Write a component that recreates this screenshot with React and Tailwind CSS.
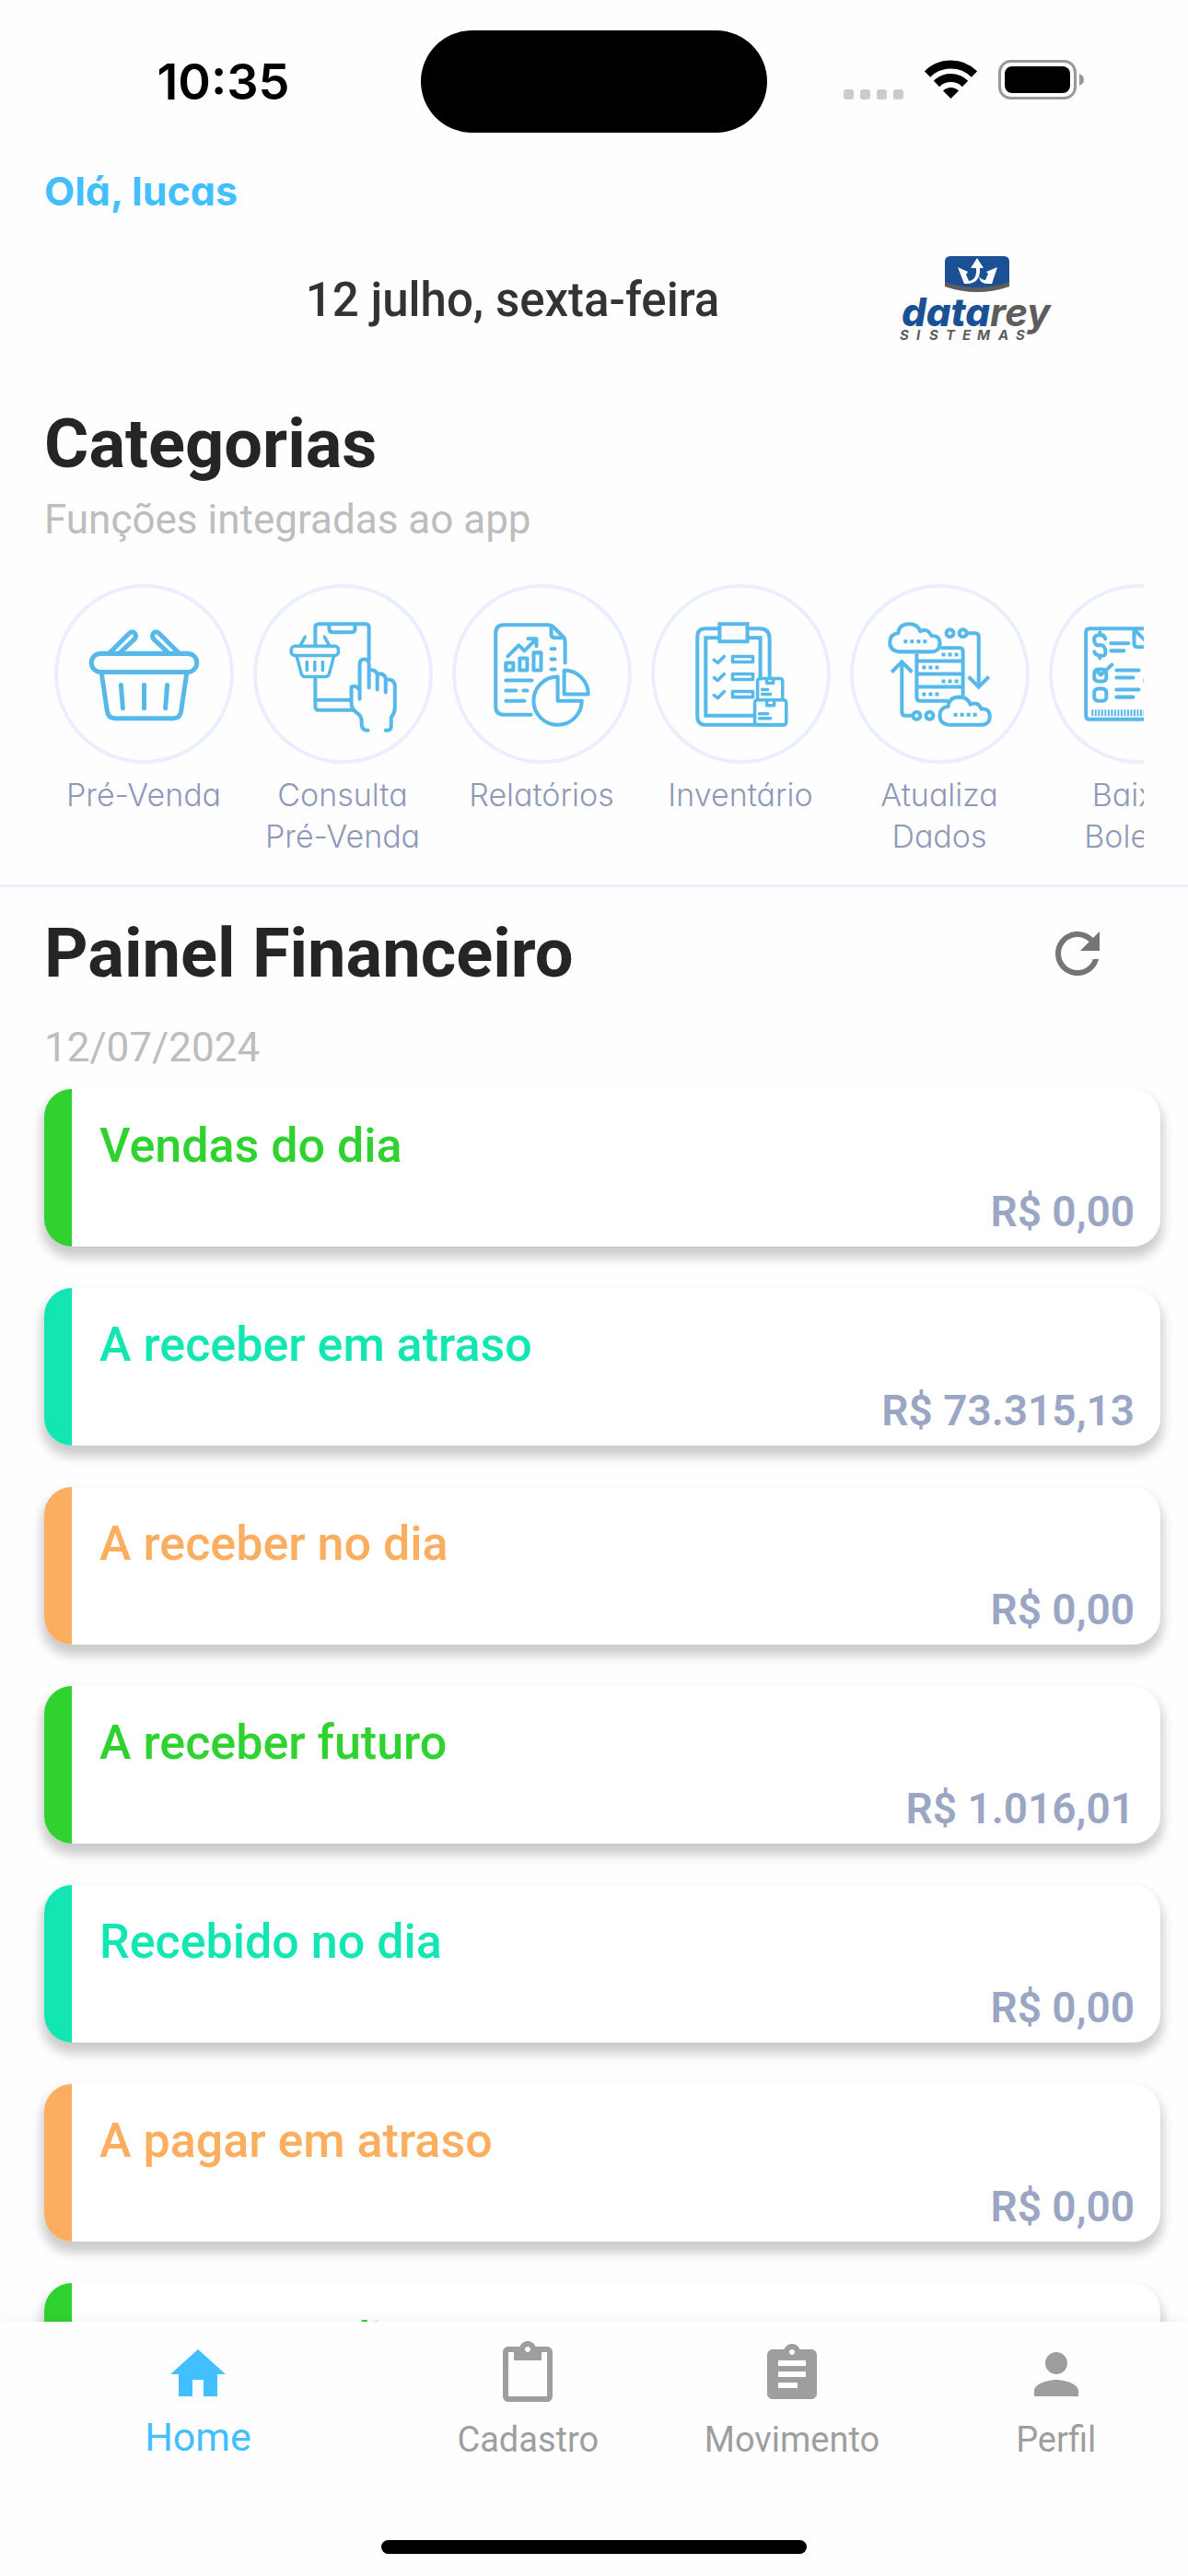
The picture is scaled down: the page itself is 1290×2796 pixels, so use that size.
import { MdHome, MdContentPaste, MdAssignment, MdPerson, MdRefresh } from "react-icons/md";

const stroke = {
  fill: "none",
  stroke: "currentColor",
  strokeWidth: 4,
  strokeLinecap: "round",
  strokeLinejoin: "round",
};

function Drawing({ children }) {
  return (
    <svg viewBox="0 0 194 194" className="h-full w-full text-[#57b8ea]" {...stroke} aria-hidden="true">
      {children}
    </svg>
  );
}

function BasketIcon() {
  return (
    <Drawing>
      <rect x="40" y="75" width="114" height="20" rx="10" strokeWidth="5" />
      <path d="M51 96l6 41q1 8 9 8h62q8 0 9-8l6-41" strokeWidth="5" />
      <path d="M60 74l21-21q4-3 6 0t0 6l-16 15M134 74l-21-21q-4-3-6 0t0 6l16 15" strokeWidth="5" />
      <path d="M72 109l2 25M97 109v25M122 109l-2 25" strokeWidth="5" />
    </Drawing>
  );
}

function PhoneIcon() {
  return (
    <Drawing>
      <path d="M67 67V47q0-4 4-4h50q4 0 4 4v35M67 102v30q0 4 4 4h38M68 125h36M82 44v4q0 4 4 4h20q4 0 4-4v-4" />
      <rect x="41" y="67" width="51" height="10" rx="4" strokeWidth="3.5" />
      <path d="M47 78l5 19q1 3 4 3h22q3 0 4-3l5-19M51 66l5-9M82 66l-5-9M58 84v9M66.500 84v9M75 84v9" strokeWidth="3.500" />
      <path d="M115 124V87q0-6 5-6t5 6v25M125 93q9-1 9 6v15M134 97q9-1 9 6v14M143 103q9-1 10 6v25q0 5-4 10v9q0 5-4 5h-2M115 115q-3-6-9-4v18q0 6 6 10t5 12q0 7 7 7" />
    </Drawing>
  );
}

function ReportIcon() {
  return (
    <Drawing>
      <path d="M85 141H56q-9 0-9-9V53q0-9 9-9h48q3 0 5 2l11 11q2 2 2 6v22M107 45v9q0 4 4 4h10" />
      <path d="M60 78l12-12 6 6 12-12M82 59h9v8" />
      <path d="M58 85h8v8h-8zM73 80h8v13h-8zM88 74h8v19h-8zM58 104h28M58 115h11M77 115h4M58 126h20M107 70h4M107 81h4M107 92h4" />
      <path d="M114 100v26h26a26 26 0 1 1-26-26zM121 93v26h26a26 26 0 0 0-26-26z" />
    </Drawing>
  );
}

function InventoryIcon() {
  return (
    <Drawing>
      <path d="M74 48H59q-9 0-9 9v86q0 9 9 9h84M104 48h13q11 0 11 11v42" />
      <path d="M74 58H59v84h52M104 58h14v44M74 43h30v19H74z" strokeLinejoin="miter" />
      <path d="M68 82l4 3 7-7M68 101l4 3 7-7M68 120l4 3 7-7M88 78h22v6H88zM88 97h22v6H88zM88 116h22v6H88z" strokeWidth="3.500" />
      <path d="M115 125v-20q0-3 3-3h21q3 0 3 3v20M125 103v4h7v-4M120 114h6M120 119h9M112 149v-21q0-3 3-3h28q3 0 3 3v21q0 3-3 3h-28q-3 0-3-3zM125 126v5h8v-5M117 140h9M117 145h12" strokeWidth="3.500" />
    </Drawing>
  );
}

function ServerIcon() {
  const dots = { strokeWidth: 4, strokeDasharray: "4 3", strokeLinecap: "butt" };
  return (
    <Drawing>
      <path d="M72 75v47q0 4 4 4h30M98 69h20q4 0 4 4v48M72 83h50M72 97h50M72 111h50" strokeLinecap="butt" />
      <path d="M53 73q-10-1-10-10t9-10q1-10 12-10 9 0 12 8 8-4 12 5 9-1 9 8 0 8-8 9z" />
      <path d="M107 152q-10-1-10-10t9-10q1-10 12-10 9 0 12 8 8-4 12 5 9-1 9 8 0 8-8 9z" />
      <path d="M58 62h26M112 141h26M99 76h20M78 90h19M99 105h20M78 119h19" {...dots} />
      <circle cx="108" cy="53" r="4" />
      <circle cx="122" cy="53" r="4" />
      <path d="M126 53h9q4 0 4 4v51M128 100l11 11 11-11" strokeLinecap="butt" strokeLinejoin="miter" />
      <circle cx="72" cy="142" r="4" />
      <circle cx="86" cy="142" r="4" />
      <path d="M68 142h-8q-4 0-4-4V86M45 95l11-11 11 11" strokeLinecap="butt" strokeLinejoin="miter" />
    </Drawing>
  );
}

function InvoiceIcon() {
  return (
    <Drawing>
      <path d="M150 48H44q-4 0-4 4v90q0 4 4 4h106M92 50v14q0 4 4 4h14M93 50l16 16" />
      <path d="M61 59q-2-5-6-4-7 0-6 6t6 5 6 6-6 5q-5 0-6-4M55 52v3M55 77v3M67 64h19M67 72h14" />
      <rect x="49" y="92" width="13" height="13" rx="4" />
      <path d="M52 94l4 4 12-11M73 93h24M73 101h18M73 114h24M73 122h18M108 96q-8 8 0 16" />
      <rect x="49" y="113" width="13" height="13" rx="4" />
      <path d="M46 139h80" strokeWidth="7" strokeDasharray="2 1.500" strokeLinecap="butt" />
    </Drawing>
  );
}

const categories = [
  { label: "Pré-Venda", Icon: BasketIcon },
  { label: "Consulta Pré-Venda", Icon: PhoneIcon },
  { label: "Relatórios", Icon: ReportIcon },
  { label: "Inventário", Icon: InventoryIcon },
  { label: "Atualiza Dados", Icon: ServerIcon },
  { label: "Baixar Boletos", Icon: InvoiceIcon },
];

const green = { bar: "bg-[#2fd22f]", text: "text-[#2fd22f]" };
const teal = { bar: "bg-[#12e6b2]", text: "text-[#12e6b2]" };
const orange = { bar: "bg-[#fbae5f]", text: "text-[#fbae5f]" };

const cards = [
  { title: "Vendas do dia", value: "R$ 0,00", tone: green },
  { title: "A receber em atraso", value: "R$ 73.315,13", tone: teal },
  { title: "A receber no dia", value: "R$ 0,00", tone: orange },
  { title: "A receber futuro", value: "R$ 1.016,01", tone: green },
  { title: "Recebido no dia", value: "R$ 0,00", tone: teal },
  { title: "A pagar em atraso", value: "R$ 0,00", tone: orange },
  { title: "A pagar no dia", value: "R$ 0,00", tone: green },
];

const tabs = [
  { label: "Home", Icon: MdHome, active: true },
  { label: "Cadastro", Icon: MdContentPaste },
  { label: "Movimento", Icon: MdAssignment },
  { label: "Perfil", Icon: MdPerson },
];

function StatusBar() {
  return (
    <header className="grid h-[177px] shrink-0 grid-cols-[1fr_376px_1fr] items-start">
      <div className="flex h-[177px] items-center justify-center pl-7 font-[Inter,sans-serif] text-[54px] font-semibold text-black">
        10:35
      </div>
      <div className="mt-[33px] h-[111px] rounded-full bg-black" />
      <div className="mt-[65px] flex h-[43px] items-end justify-end gap-[23px] pr-[113px]">
        <div className="flex gap-[7px]">
          {[0, 1, 2, 3].map((i) => (
            <span key={i} className="h-[11px] w-[11px] rounded-[3px] bg-[#cbcbcb]" />
          ))}
        </div>
        <svg width="57" height="43" viewBox="0 0 57 43" aria-hidden="true">
          <g fill="none" stroke="#000" strokeWidth="9">
            <path d="M3 15.500a36 36 0 0 1 51 0" />
            <path d="M13 26a22 22 0 0 1 31 0" />
          </g>
          <path d="M20 33.500a12 12 0 0 1 17 0L28.500 42z" />
        </svg>
        <svg width="93" height="43" viewBox="0 0 93 43" aria-hidden="true">
          <rect x="1.500" y="1.500" width="82" height="40" rx="12" fill="none" stroke="#999" strokeWidth="3" />
          <rect x="7" y="7" width="71" height="29" rx="8" />
          <path d="M88 15q5 2 5 6.500T88 28z" fill="#999" />
        </svg>
      </div>
    </header>
  );
}

function Logo() {
  return (
    <svg width="168" height="94" viewBox="974 276 168 94" className="overflow-visible" role="img" aria-label="datarey sistemas">
      <path d="M1026 300v11q35 12 70 0v-11z" fill="#5d5d5d" />
      <path d="M1026 284q0-6 6-6h58q6 0 6 6v22q-35 12-70 0z" fill="#1a5195" />
      <g fill="#fff">
        <path d="M1040 290l11 5-2 3 3 7q9-1 8-14h-6l7-11 7 11h-4q1 18-17 17z" />
        <path d="M1083 290l-6 18h-5q-8 0-9-8 3 4 7 4l3-7-2-2z" />
      </g>
      <text x="979" y="354" fontFamily="Inter, sans-serif" fontSize="42" fontStyle="italic" fontWeight="800" fill="#1a5195">
        data<tspan fontWeight="700" fill="#5d5d5d">rey</tspan>
      </text>
      <text y="369" x="977 995 1009 1027 1045 1061 1084 1103" fontFamily="Inter, sans-serif" fontSize="15" fontStyle="italic" fontWeight="700" fill="#5d5d5d">
        SISTEMAS
      </text>
    </svg>
  );
}

function FinanceCard({ title, value, tone }) {
  return (
    <li className="flex h-[171px] shrink-0 overflow-hidden rounded-[30px] bg-white shadow-[0_9px_12px_3px_#00000033]">
      <div className={`w-[30px] shrink-0 ${tone.bar}`} />
      <div className="flex flex-1 flex-col pt-[30px] pr-[28px] pl-[30px]">
        <h3 className={`text-[52px] leading-[64px] font-medium ${tone.text}`}>{title}</h3>
        <p className="mt-[12px] text-right text-[46px] leading-[54px] font-semibold text-[#9ba6c5]">{value}</p>
      </div>
    </li>
  );
}

export default function App() {
  return (
    <div className="flex h-screen flex-col overflow-hidden bg-[#fefefe] font-[Roboto,sans-serif]">
      <StatusBar />

      <p className="px-12 font-[Inter,sans-serif] text-[43px] leading-[60px] font-bold text-[#42bfff] [font-feature-settings:'cv11']">
        Olá, lucas
      </p>

      <div className="mt-[39px] grid h-[94px] grid-cols-[1fr_168px] pr-[148px] pl-[139px]">
        <p className="self-center pt-[6px] text-center text-[51px] leading-[56px] font-medium text-[#333333]">
          12 julho, sexta-feira
        </p>
        <Logo />
      </div>

      <section className="border-b-[3px] border-[#e9f0ff] px-12 pb-[30px]">
        <h2 className="mt-[70px] text-[74px] leading-[84px] font-bold text-[#252525]">Categorias</h2>
        <p className="mt-[13px] text-[44px] leading-[54px] text-[#bdbdbd]">Funções integradas ao app</p>
        <ul className="mt-[43px] flex overflow-hidden">
          {categories.map(({ label, Icon }) => (
            <li key={label} className="w-[216px] shrink-0">
              <button type="button" className="flex w-full flex-col items-center text-[#8f98b8]">
                <span className="block h-[195px] w-[195px] rounded-full shadow-[inset_0_0_0_4px_#e9effe]">
                  <Icon />
                </span>
                <span className="mt-[11px] block w-[200px] text-center font-[Inter,sans-serif] text-[34px] leading-[45px] font-light [font-feature-settings:'cv11']">
                  {label}
                </span>
              </button>
            </li>
          ))}
        </ul>
      </section>

      <section className="flex min-h-0 flex-1 flex-col">
        <div className="flex items-center justify-between pt-[30px] pr-[84px] pl-12">
          <h2 className="text-[74px] leading-[84px] font-bold text-[#252525]">Painel Financeiro</h2>
          <button type="button" aria-label="Atualizar" className="text-[#757575]">
            <MdRefresh size={72} />
          </button>
        </div>
        <p className="mt-[33px] px-12 text-[44px] leading-[54px] text-[#bdbdbd]">12/07/2024</p>
        <ul className="mt-[18px] flex min-h-0 flex-1 flex-col gap-[45px] overflow-hidden pr-[30px] pl-12">
          {cards.map((card) => (
            <FinanceCard key={card.title} {...card} />
          ))}
        </ul>
      </section>

      <nav className="h-[276px] shrink-0 bg-[#fefefe] pt-[21px] shadow-[0_-2px_16px_#0000000d]">
        <div className="grid grid-cols-[3fr_2fr_2fr_2fr]">
          {tabs.map(({ label, Icon, active }) => (
            <button
              key={label}
              type="button"
              className={
                active
                  ? "flex flex-col items-center text-[43px] leading-[64px] text-[#42bfff]"
                  : "flex flex-col items-center text-[38px] leading-[70px] text-[#9e9e9e]"
              }
            >
              <Icon size={72} />
              {label}
            </button>
          ))}
        </div>
        <div className="mx-auto mt-[74px] h-[15px] w-[462px] rounded-full bg-black" />
      </nav>
    </div>
  );
}
